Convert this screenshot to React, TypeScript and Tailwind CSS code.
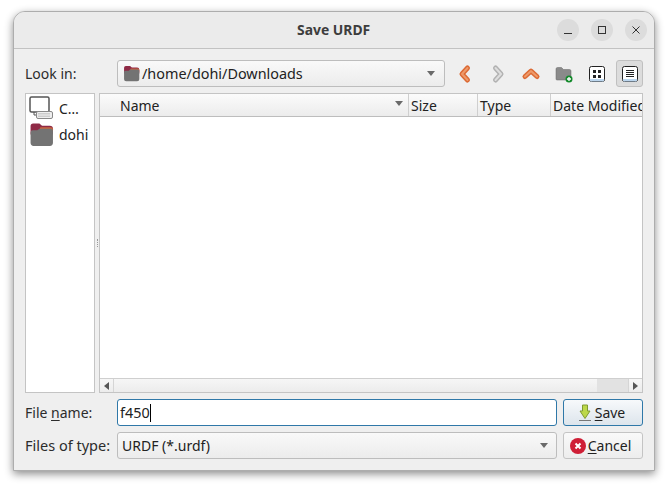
import React from 'react';

const font = { fontFamily: '"Noto Sans", sans-serif' };

const Caret = ({ className = '' }: { className?: string }) => (
  <svg width="8" height="5" viewBox="0 0 8 5" className={className}>
    <path d="M0 0h8L4 5z" fill="#6a6a6a" />
  </svg>
);

const FolderIcon = ({ size = 16 }: { size?: number }) => (
  <svg width={size} height={size} viewBox="0 0 24 24">
    <path d="M1.500 4a2.500 2.500 0 0 1 2.500-2.500h6l2.500 2h7.500a3 3 0 0 1 3 3V12h-21.500z" fill="#8f2a46" />
    <path d="M11 5h10a2 2 0 0 1 2 2v2H9z" fill="#c9653f" />
    <path d="M1.500 10a2 2 0 0 1 2-2H8l2-1.500h11a2 2 0 0 1 2 2V20a3 3 0 0 1-3 3H4.500a3 3 0 0 1-3-3z" fill="#737373" />
  </svg>
);

const Chevron = ({ d, c1, c2 }: { d: string; c1: string; c2: string }) => (
  <svg width="20" height="20" viewBox="0 0 20 20" fill="none">
    <path d={d} stroke={c2} strokeWidth="5" strokeLinejoin="round" strokeLinecap="round" />
    <path d={d} stroke={c1} strokeWidth="2" strokeLinejoin="round" strokeLinecap="round" />
  </svg>
);

const ToolBtn = ({ children, active }: { children: React.ReactNode; active?: boolean }) => (
  <div className={`w-[27px] h-[27px] flex items-center justify-center rounded-[3px] border ${active ? 'bg-[#dcdcdc] border-[#c0c0c0]' : 'border-transparent'}`}>
    {children}
  </div>
);

const ViewIcon = ({ list }: { list?: boolean }) => (
  <svg width="16" height="16" viewBox="0 0 16 16">
    <rect x="0.500" y="0.500" width="15" height="15" rx="2" fill="#fff" stroke="#222" />
    <path d="M1 13h14v1.500a1 1 0 0 1-1 1H2a1 1 0 0 1-1-1z" fill="#bcd6ee" />
    {list ? (
      <path d="M4 4.500h8M4 6.500h8M4 8.500h8M4 10.500h8" stroke="#222" strokeWidth="1" />
    ) : (
      <path d="M4 4h3v3H4zM9 4h3v3H9zM4 9h3v3H4zM9 9h3v3H9z" fill="#222" />
    )}
  </svg>
);

const WinBtn = ({ children }: { children: React.ReactNode }) => (
  <div className="w-[22px] h-[22px] rounded-full bg-[#dcdcdc] flex items-center justify-center">{children}</div>
);

const Col = ({ label, className }: { label: string; className: string }) => (
  <div className={`h-full border-r border-[#cfcfcf] overflow-hidden whitespace-nowrap flex items-center ${className}`}>{label}</div>
);

export default function App() {
  return (
    <div className="w-[668px] h-[487px] bg-white pl-[13px] pt-[11px] overflow-hidden" style={font}>
      <div className="w-[642px] h-[460px] flex flex-col bg-[#efefef] border border-[#adadad] rounded-t-[12px] shadow-[0_3px_9px_rgba(0,0,0,0.45)] text-[14px] text-[#2c2c2c] overflow-hidden">
        {/* title bar */}
        <div className="h-[37px] shrink-0 flex items-center justify-between bg-[#ebebeb] border-b border-[#c2c2c2] pl-[254px] pr-[7px]">
          <div className="font-bold text-[13.900px] text-[#3d3d3d] ml-[29px]">Save URDF</div>
          <div className="flex gap-[12px]">
            <WinBtn>
              <svg width="10" height="10" viewBox="0 0 10 10"><path d="M1 8.500h8" stroke="#333" strokeWidth="1" /></svg>
            </WinBtn>
            <WinBtn>
              <svg width="10" height="10" viewBox="0 0 10 10"><rect x="1.500" y="1.500" width="7" height="7" fill="none" stroke="#333" /></svg>
            </WinBtn>
            <WinBtn>
              <svg width="10" height="10" viewBox="0 0 10 10"><path d="M1.500 1.500l7 7M8.500 1.500l-7 7" stroke="#333" strokeWidth="1" /></svg>
            </WinBtn>
          </div>
        </div>

        <div className="flex-1 flex flex-col px-[11px] pt-[11px] min-h-0">
          {/* look in row */}
          <div className="h-[27px] shrink-0 flex items-center">
            <div className="w-[92px]">Look in:</div>
            <div className="w-[328px] h-full flex items-center rounded-[3px] border border-[#bdbdbd] bg-gradient-to-b from-[#f9f9f9] to-[#ececec] pl-[5px] pr-[9px]">
              <FolderIcon size={17} />
              <span className="ml-[2px] flex-1 text-[#222] text-[14.400px]">/home/dohi/Downloads</span>
              <Caret />
            </div>
            <div className="flex-1 flex items-center justify-between pl-[6px]">
              <ToolBtn><Chevron d="M12.500 4L7 10l5.500 6" c1="#ee9a6a" c2="#dc6a34" /></ToolBtn>
              <ToolBtn><Chevron d="M7.500 4L13 10l-5.500 6" c1="#dedede" c2="#b2b2b2" /></ToolBtn>
              <ToolBtn><Chevron d="M4 12.500L10 7l6 5.500" c1="#ee9a6a" c2="#dc6a34" /></ToolBtn>
              <ToolBtn>
                <svg width="18" height="18" viewBox="0 0 18 18">
                  <path d="M1 4a1.500 1.500 0 0 1 1.500-1.500h4L8.500 4.500h6A1.500 1.500 0 0 1 16 6v8a1 1 0 0 1-1 1H2a1 1 0 0 1-1-1z" fill="#8a8a8a" stroke="#666" strokeWidth="0.500" />
                  <circle cx="14" cy="14" r="3.500" fill="#138a2b" />
                  <path d="M12 14h4M14 12v4" stroke="#fff" strokeWidth="1.300" />
                </svg>
              </ToolBtn>
              <ToolBtn><ViewIcon /></ToolBtn>
              <ToolBtn active><ViewIcon list /></ToolBtn>
            </div>
          </div>

          {/* sidebar + file list */}
          <div className="h-[300px] shrink-0 flex mt-[6px]">
            <div className="w-[70px] shrink-0 bg-white border border-[#c4c4c4] pl-[3px] pt-[1px]">
              <div className="h-[26px] flex items-center">
                <svg width="25" height="25" viewBox="0 0 25 25" className="shrink-0">
                  <rect x="1" y="1" width="19" height="15" rx="1.500" fill="#fff" stroke="#555" strokeWidth="1.500" />
                  <path d="M5 16v3h4" fill="none" stroke="#555" />
                  <rect x="7.500" y="15.500" width="16" height="7" rx="1.500" fill="#eee" stroke="#888" />
                  <path d="M9.500 17.500h12M9.500 19h12M9.500 20.500h12" stroke="#aaa" strokeDasharray="1 1" />
                </svg>
                <span className="ml-[5px] text-[#222]">C…</span>
              </div>
              <div className="h-[26px] flex items-center">
                <FolderIcon size={25} />
                <span className="ml-[5px] text-[#222]">dohi</span>
              </div>
            </div>

            <div className="w-[4px] shrink-0 flex items-center justify-center">
              <div className="w-[1px] h-[8px] border-l border-dotted border-[#999]" />
            </div>

            <div className="flex-1 flex flex-col min-w-0 bg-white border border-[#c4c4c4]">
              <div className="h-[23px] shrink-0 flex bg-gradient-to-b from-[#fbfbfb] to-[#ececec] border-b border-[#bdbdbd] text-[#222]">
                <div className="w-[309px] h-full border-r border-[#cfcfcf] flex items-center justify-between pl-[20px] pr-[5px]">
                  <span>Name</span>
                  <Caret className="mb-[4px]" />
                </div>
                <Col label="Size" className="w-[69px] pl-[2px]" />
                <Col label="Type" className="w-[73px] pl-[2px]" />
                <div className="flex-1 overflow-hidden whitespace-nowrap flex items-center pl-[2px]">Date Modified</div>
              </div>
              <div className="flex-1" />
              <div className="h-[14px] shrink-0 flex items-center border-t border-[#cfcfcf] bg-gradient-to-b from-[#f6f6f6] to-[#ececec]">
                <div className="w-[14px] h-full flex items-center justify-center border-r border-[#d5d5d5]">
                  <svg width="5" height="8" viewBox="0 0 5 8"><path d="M5 0v8L0 4z" fill="#555" /></svg>
                </div>
                <div className="flex-1" />
                <div className="w-[31px] h-full bg-[#e2e2e2]" />
                <div className="w-[14px] h-full flex items-center justify-center border-l border-[#d5d5d5]">
                  <svg width="5" height="8" viewBox="0 0 5 8"><path d="M0 0v8l5-4z" fill="#555" /></svg>
                </div>
              </div>
            </div>
          </div>

          {/* file name row */}
          <div className="h-[27px] shrink-0 flex items-center mt-[6px]">
            <div className="w-[92px]">File <span className="underline underline-offset-2">n</span>ame:</div>
            <div className="w-[440px] h-full flex items-center rounded-[3px] border border-[#2f78a8] bg-white pl-[2px] text-[#222] text-[14.400px]">
              f450<span className="w-[1px] h-[18px] bg-black" />
            </div>
            <div className="ml-[6px] w-[80px] h-full flex items-center justify-center gap-[4px] rounded-[3px] border border-[#2f78a8] bg-gradient-to-b from-[#f7f9fb] to-[#dde5ec] pr-[2px] text-[#222]">
              <svg width="12" height="18" viewBox="0 0 12 18">
                <path d="M3.500 1h5v6H11l-5 7.500L1 7h2.500z" fill="#bcd84a" stroke="#7f9a33" />
                <path d="M0 16.500h12" stroke="#777" strokeWidth="1" />
              </svg>
              <span><span className="underline underline-offset-2">S</span>ave</span>
            </div>
          </div>

          {/* file type row */}
          <div className="h-[27px] shrink-0 flex items-center mt-[6px]">
            <div className="w-[92px] whitespace-nowrap text-[14.500px]">Files of type:</div>
            <div className="w-[440px] h-full flex items-center justify-between rounded-[3px] border border-[#bdbdbd] bg-gradient-to-b from-[#f9f9f9] to-[#ececec] pl-[4px] pr-[8px] text-[#222]">
              <span>URDF (*.urdf)</span>
              <Caret />
            </div>
            <div className="ml-[6px] w-[80px] h-full flex items-center justify-center gap-[2px] rounded-[3px] border border-[#c4c4c4] bg-gradient-to-b from-[#f9f9f9] to-[#ededed] pr-[5px] text-[#222]">
              <svg width="16" height="16" viewBox="0 0 16 16">
                <circle cx="8" cy="8" r="8" fill="#cf1f36" />
                <path d="M5.500 5.500l5 5M10.500 5.500l-5 5" stroke="#fff" strokeWidth="2" />
              </svg>
              <span><span className="underline underline-offset-2">C</span>ancel</span>
            </div>
          </div>
        </div>
      </div>
    </div>
  );
}
